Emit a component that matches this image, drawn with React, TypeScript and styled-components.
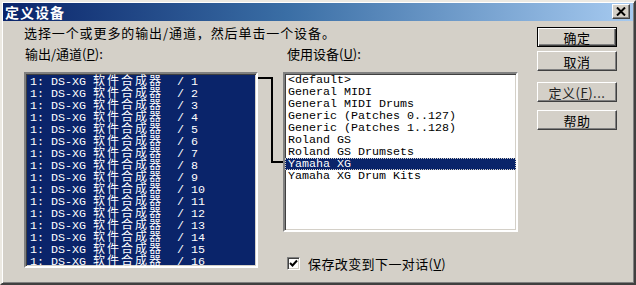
import React from "react";
import styled, { createGlobalStyle } from "styled-components";

const GlobalStyle = createGlobalStyle`
  html, body { margin: 0; padding: 0; background: #d4d0c8; overflow: hidden; }
  * { box-sizing: border-box; }
`;

const UI_FONT = `"Noto Sans CJK SC", "Liberation Sans", sans-serif`;
const MONO_FONT = `"Liberation Mono", "Noto Sans CJK SC", monospace`;

const Window = styled.div`
  width: 636px;
  height: 285px;
  background: #d4d0c8;
  border-style: solid;
  border-width: 2px;
  border-color: #ece9e2 #404040 #404040 #ece9e2;
  box-shadow: inset 1px 1px 0 #ffffff, inset -1px -1px 0 #808080;
  padding: 1px;
  display: flex;
  flex-direction: column;
  font-family: ${UI_FONT};
  font-size: 13px;
  color: #000;
`;

const TitleBar = styled.div`
  height: 18px;
  flex: none;
  display: flex;
  align-items: center;
  justify-content: space-between;
  padding: 0 3px 0 2px;
  background: linear-gradient(to right, #0a246a 0%, #3a6ea5 45%, #a6caf0 100%);
`;

const TitleText = styled.span`
  color: #fff;
  font-weight: bold;
  font-size: 14px;
  letter-spacing: 1px;
  line-height: 18px;
`;

const CloseButton = styled.div`
  width: 18px;
  height: 15px;
  background: #d4d0c8;
  border-style: solid;
  border-width: 1px;
  border-color: #fff #404040 #404040 #fff;
  box-shadow: inset -1px -1px 0 #808080;
  display: flex;
  align-items: center;
  justify-content: center;
  margin-top: -2px;
`;

const Body = styled.div`
  flex: 1;
  display: flex;
  padding: 5px 0 0 21px;
`;

const Main = styled.div`
  width: 494px;
  display: flex;
  flex-direction: column;
`;

const Instruction = styled.div`
  height: 14px;
  line-height: 14px;
  letter-spacing: 0.9px;
  margin-bottom: 7px;
  white-space: nowrap;
`;

const Panes = styled.div`
  display: flex;
`;

const Pane = styled.div<{ $w: number }>`
  width: ${(p) => p.$w}px;
  display: flex;
  flex-direction: column;
`;

const Label = styled.div<{ $indent?: number }>`
  height: 14px;
  line-height: 14px;
  margin-bottom: 11px;
  padding-left: ${(p) => p.$indent ?? 1}px;
  white-space: nowrap;
`;

const Acc = styled.span`
  text-decoration: underline;
  text-underline-offset: 1px;
`;

const ListBox = styled.div<{ $h: number; $dark?: boolean }>`
  height: ${(p) => p.$h}px;
  border-style: solid;
  border-width: 2px;
  border-color: #808080 #ffffff #ffffff #808080;
  box-shadow: inset 1px 1px 0 #404040, inset -1px -1px 0 #d4d0c8;
  background: ${(p) => (p.$dark ? "#0a246a" : "#ffffff")};
  color: ${(p) => (p.$dark ? "#ffffff" : "#000000")};
  font-family: ${MONO_FONT};
  font-size: 11.67px;
`;

const Row = styled.div<{ $pad: number; $selected?: boolean }>`
  height: 12px;
  line-height: 12px;
  padding-left: ${(p) => p.$pad}px;
  white-space: pre;
  background: ${(p) => (p.$selected ? "#0a246a" : "transparent")};
  color: ${(p) => (p.$selected ? "#ffffff" : "inherit")};
  outline: ${(p) => (p.$selected ? "1px dotted #d4d0c8" : "none")};
  outline-offset: -1px;
`;

const Cjk = styled.span`
  font-family: "Noto Sans CJK SC", sans-serif;
  font-size: 12px;
  line-height: 12px;
  letter-spacing: 2px;
`;

const Connector = styled.div`
  width: 25px;
  padding-top: 25px;
  flex: none;
`;

const CheckRow = styled.div`
  margin-top: 25px;
  padding-left: 4px;
  display: flex;
  align-items: center;
  gap: 8px;
  height: 13px;
`;

const CheckBox = styled.div`
  width: 13px;
  height: 13px;
  border-style: solid;
  border-width: 1px;
  border-color: #808080 #ffffff #ffffff #808080;
  box-shadow: inset 1px 1px 0 #404040, inset -1px -1px 0 #d4d0c8;
  background: #fff;
  display: flex;
  align-items: center;
  justify-content: center;
`;

const CheckText = styled.span`
  line-height: 14px;
  letter-spacing: 0.4px;
`;

const ButtonColumn = styled.div`
  margin-left: 19px;
  padding-top: 1px;
  display: flex;
  flex-direction: column;
`;

const Button = styled.div<{ $mt?: number; $default?: boolean; $dim?: boolean }>`
  width: 80px;
  height: 20px;
  margin-top: ${(p) => p.$mt ?? 0}px;
  display: flex;
  align-items: center;
  justify-content: center;
  background: #d4d0c8;
  border: 1px solid ${(p) => (p.$default ? "#000" : "transparent")};
  border-color: ${(p) => (p.$default ? "#000" : "#fff #404040 #404040 #fff")};
  box-shadow: ${(p) =>
    p.$default
      ? "inset 1px 1px 0 #fff, inset -1px -1px 0 #404040, inset -2px -2px 0 #808080"
      : "inset -1px -1px 0 #808080"};
  font-size: 13px;
  color: ${(p) => (p.$dim ? "#222" : "#000")};
  letter-spacing: 0.5px;
  white-space: nowrap;
`;

const channels = Array.from({ length: 16 }, (_, i) => i + 1);
const devices = [
  "<default>",
  "General MIDI",
  "General MIDI Drums",
  "Generic (Patches 0..127)",
  "Generic (Patches 1..128)",
  "Roland GS",
  "Roland GS Drumsets",
  "Yamaha XG",
  "Yamaha XG Drum Kits",
];

export default function App() {
  return (
    <>
      <GlobalStyle />
      <Window>
        <TitleBar>
          <TitleText>定义设备</TitleText>
          <CloseButton>
            <svg width="10" height="9" viewBox="0 0 10 9">
              <path d="M1 0.5 L9 8.5 M9 0.5 L1 8.5" stroke="#000" strokeWidth="2" />
            </svg>
          </CloseButton>
        </TitleBar>
        <Body>
          <Main>
            <Instruction>选择一个或更多的输出/通道，然后单击一个设备。</Instruction>
            <Panes>
              <Pane $w={234}>
                <Label>
                  输出/通道(<Acc>P</Acc>):
                </Label>
                <ListBox $h={196} $dark>
                  {channels.map((n) => (
                    <Row key={n} $pad={4}>
                      {"1: DS-XG "}
                      <Cjk>软件合成器</Cjk>
                      {`  / ${n}`}
                    </Row>
                  ))}
                </ListBox>
              </Pane>
              <Connector>
                <svg width="25" height="100" viewBox="0 0 25 100">
                  <path
                    d="M0 6 H14 V90 H25"
                    fill="none"
                    stroke="#000"
                    strokeWidth="2"
                  />
                </svg>
              </Connector>
              <Pane $w={235}>
                <Label $indent={4}>
                  使用设备(<Acc>U</Acc>):
                </Label>
                <ListBox $h={160}>
                  {devices.map((d) => (
                    <Row key={d} $pad={3} $selected={d === "Yamaha XG"}>
                      {d}
                    </Row>
                  ))}
                </ListBox>
                <CheckRow>
                  <CheckBox>
                    <svg width="9" height="9" viewBox="0 0 9 9">
                      <path
                        d="M1 4 L3.5 6.5 L8 1.5"
                        fill="none"
                        stroke="#000"
                        strokeWidth="2"
                      />
                    </svg>
                  </CheckBox>
                  <CheckText>
                    保存改变到下一对话(<Acc>V</Acc>)
                  </CheckText>
                </CheckRow>
              </Pane>
            </Panes>
          </Main>
          <ButtonColumn>
            <Button $default>确定</Button>
            <Button $mt={4}>取消</Button>
            <Button $mt={11} $dim>
              定义(<Acc>F</Acc>)...
            </Button>
            <Button $mt={8}>帮助</Button>
          </ButtonColumn>
        </Body>
      </Window>
    </>
  );
}
